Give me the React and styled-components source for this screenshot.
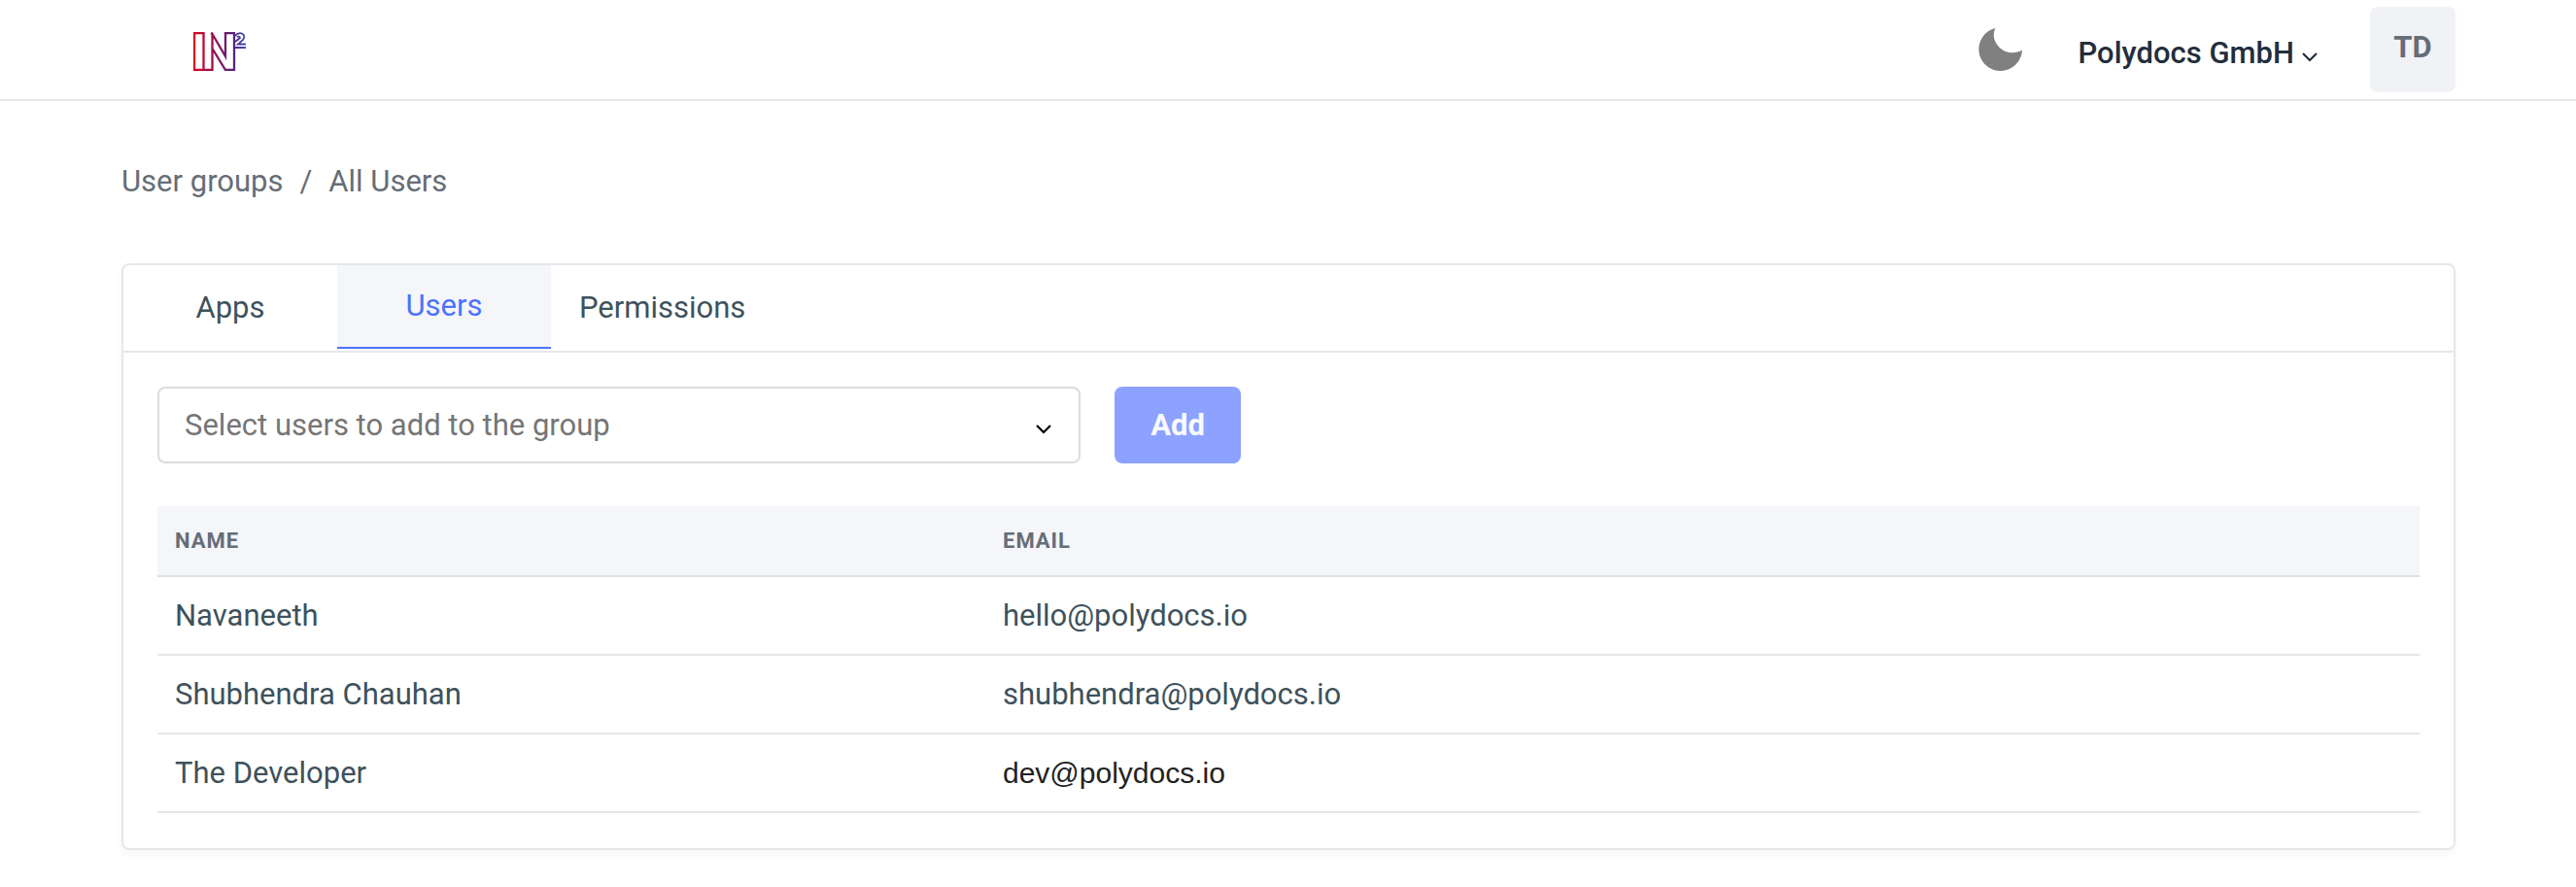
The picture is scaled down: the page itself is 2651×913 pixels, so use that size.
import React from "react";
import styled, { createGlobalStyle } from "styled-components";

const GlobalStyle = createGlobalStyle`
  * { box-sizing: border-box; }
  body {
    margin: 0;
    background: #fff;
    color: #3e515b;
    font-family: Roboto, "Liberation Sans", sans-serif;
    font-size: 31px;
    line-height: 40px;
  }
  button, input, select { font: inherit; color: inherit; }
`;

const Header = styled.header`
  display: flex;
  align-items: center;
  justify-content: space-between;
  height: 104px;
  padding: 0 124px 0 199px;
  border-bottom: 2px solid #e6e7e9;
`;

const LogoLink = styled.a`
  display: flex;
  margin-top: 4px;
`;

const HeaderActions = styled.div`
  display: flex;
  align-items: center;
`;

const IconButton = styled.button`
  display: flex;
  margin-right: 58px;
  padding: 0;
  border: 0;
  background: none;
`;

const OrgButton = styled.button`
  display: flex;
  align-items: center;
  gap: 8px;
  margin: 8px 54px 0 0;
  padding: 0;
  border: 0;
  background: none;
  color: #232e3c;
  font-weight: 500;

  svg { margin-top: 8px; }
`;

const Avatar = styled.button`
  width: 88px;
  height: 88px;
  padding: 0 0 4px;
  border: 0;
  border-radius: 8px;
  background: #f0f2f6;
  color: #656d77;
  font-weight: 700;
`;

const Main = styled.main`
  padding: 63px 124px 38px 125px;
`;

const Breadcrumb = styled.nav`
  display: flex;
  gap: 17px;
  margin-bottom: 64px;
  color: #656d77;
`;

const Crumb = styled.a`
  color: inherit;
  text-decoration: none;
`;

const Card = styled.section`
  border: 2px solid #e6e7e9;
  border-radius: 8px;
  box-shadow: 0 4px 8px rgba(35, 46, 60, 0.04);
`;

const Tabs = styled.div`
  display: flex;
  height: 90px;
  border-bottom: 2px solid #e6e7e9;
`;

const Tab = styled.button`
  min-width: 220px;
  height: ${({ $active }) => ($active ? "86px" : "88px")};
  padding: 0 29px;
  border: 0;
  border-bottom: ${({ $active }) => ($active ? "2px solid #4d72fa" : "0")};
  background: ${({ $active }) => ($active ? "#f4f6fa" : "transparent")};
  color: ${({ $active }) => ($active ? "#4d72fa" : "#3e525b")};
`;

const CardBody = styled.div`
  padding: 35px 35px 36px;
`;

const AddForm = styled.form`
  display: flex;
  gap: 35px;
  margin-bottom: 44px;
`;

const SelectBox = styled.div`
  display: grid;
  flex: 0 1 950px;
  align-items: center;
  color: #000;

  > * { grid-area: 1 / 1; }

  svg {
    justify-self: end;
    margin: 8px 30px 0 0;
    pointer-events: none;
  }
`;

const UserSelect = styled.select`
  width: 100%;
  height: 79px;
  padding: 0 26px;
  appearance: none;
  border: 2px solid #dadcde;
  border-radius: 8px;
  background: #fff;
  color: #757575;
`;

const AddButton = styled.button`
  width: 130px;
  height: 79px;
  padding: 0;
  border: 0;
  border-radius: 8px;
  background: #8da2ff;
  color: #f8fafc;
  font-weight: 700;
`;

const Table = styled.table`
  width: 100%;
  table-layout: fixed;
  border-collapse: separate;
  border-spacing: 0;
`;

const HeadCell = styled.th`
  width: ${({ $width }) => $width};
  height: 73px;
  padding: 0 18px;
  border-bottom: 2px solid #dce1e8;
  background: #f4f6fa;
  color: #656d77;
  font-size: 22px;
  font-weight: 700;
  text-align: left;
  text-transform: uppercase;
  letter-spacing: 1px;
`;

const Cell = styled.td`
  height: 81px;
  padding: 0 18px;
  border-bottom: 2px solid #e6e7e9;
`;

const PlainEmail = styled.span`
  color: #222;
  font-family: "Liberation Sans", Arial, sans-serif;
  font-size: 30px;
`;

const users = [
  { name: "Navaneeth", email: "hello@polydocs.io" },
  { name: "Shubhendra Chauhan", email: "shubhendra@polydocs.io" },
  { name: "The Developer", email: "dev@polydocs.io", plain: true },
];

function Logo() {
  return (
    <svg width="55" height="40" viewBox="0 0 55 40" fill="none" role="img" aria-label="IN2">
      <defs>
        <linearGradient id="logo" gradientUnits="userSpaceOnUse" x1="0" y1="0" x2="54" y2="0">
          <stop offset="0" stopColor="#e2001f" />
          <stop offset="0.75" stopColor="#55207c" />
          <stop offset="1" stopColor="#3b4fb5" />
        </linearGradient>
      </defs>
      <g stroke="url(#logo)" strokeWidth="2.3">
        <path d="M1 1H10.5V39H1ZM10.5 39H19.5V17L33 39H42V1H33V25L19.5 2V20M19.5 2L18 1" />
        <path d="M43 4Q46 0 50 1.500Q54 4 51 8L46 12.500H54M43 16H54M43 10L48 6Q48 4 45 5" strokeWidth="1.800" />
      </g>
    </svg>
  );
}

function Moon() {
  return (
    <svg width="45" height="44" viewBox="0 0 45 44" aria-hidden="true">
      <path d="M17.500 0A22.300 22.300 0 1 0 45 22.500C39 26 30 27 23 21C16 15 14 7 17.500 0Z" fill="#808080" />
    </svg>
  );
}

function Chevron() {
  return (
    <svg width="16" height="10" viewBox="0 0 16 10" fill="none" aria-hidden="true">
      <path d="M1 1L8 8L15 1" stroke="currentColor" strokeWidth="2.200" />
    </svg>
  );
}

export default function App() {
  return (
    <>
      <GlobalStyle />
      <Header>
        <LogoLink href="#home"><Logo /></LogoLink>
        <HeaderActions>
          <IconButton type="button" aria-label="Toggle dark mode"><Moon /></IconButton>
          <OrgButton type="button">Polydocs GmbH<Chevron /></OrgButton>
          <Avatar type="button">TD</Avatar>
        </HeaderActions>
      </Header>
      <Main>
        <Breadcrumb aria-label="Breadcrumb">
          <Crumb href="#groups">User groups</Crumb>
          <span>/</span>
          <Crumb href="#all">All Users</Crumb>
        </Breadcrumb>
        <Card>
          <Tabs role="tablist">
            <Tab type="button" role="tab" aria-selected="false">Apps</Tab>
            <Tab type="button" role="tab" aria-selected="true" $active>Users</Tab>
            <Tab type="button" role="tab" aria-selected="false">Permissions</Tab>
          </Tabs>
          <CardBody>
            <AddForm onSubmit={(event) => event.preventDefault()}>
              <SelectBox>
                <UserSelect aria-label="Select users to add to the group" defaultValue="">
                  <option value="">Select users to add to the group</option>
                </UserSelect>
                <Chevron />
              </SelectBox>
              <AddButton type="submit">Add</AddButton>
            </AddForm>
            <Table>
              <thead>
                <tr>
                  <HeadCell $width="852px">Name</HeadCell>
                  <HeadCell>Email</HeadCell>
                </tr>
              </thead>
              <tbody>
                {users.map((user) => (
                  <tr key={user.email}>
                    <Cell>{user.name}</Cell>
                    <Cell>{user.plain ? <PlainEmail>{user.email}</PlainEmail> : user.email}</Cell>
                  </tr>
                ))}
              </tbody>
            </Table>
          </CardBody>
        </Card>
      </Main>
    </>
  );
}
